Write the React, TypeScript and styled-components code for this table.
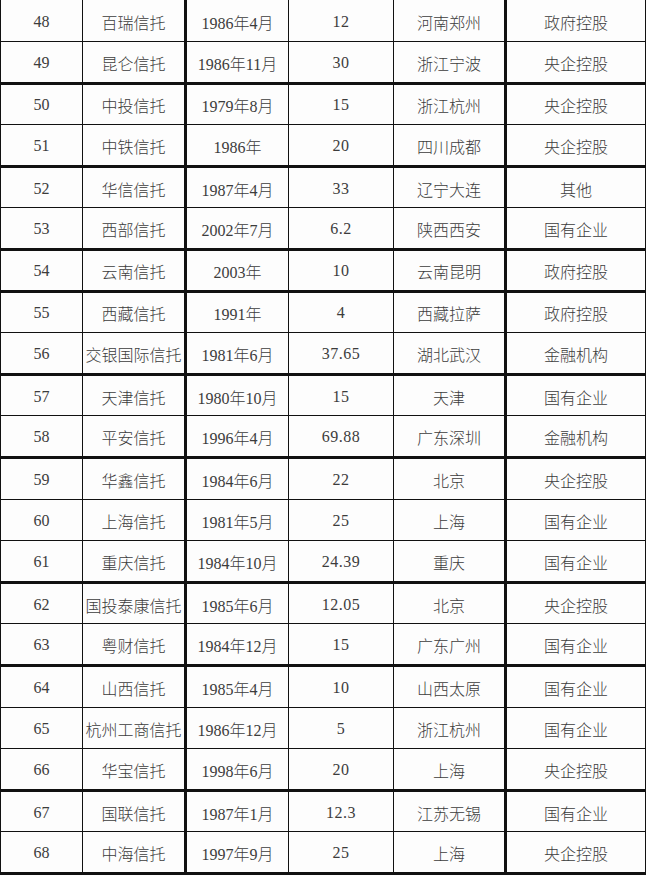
import React from 'react'
import styled, { createGlobalStyle } from 'styled-components'

const GlobalStyle = createGlobalStyle`
  html, body {
    margin: 0;
    padding: 0;
    background: #fdfdfd;
  }
`

const StyledSheet = styled.div`
  width: 646px;
  height: 876px;
  overflow: hidden;
  background: #fdfdfd;
`

const StyledTable = styled.table`
  width: 645px;
  border-collapse: collapse;
  table-layout: fixed;
  font-family: 'Liberation Serif', 'Noto Sans CJK SC', serif;
  font-size: 16px;
  color: #3c3c3c;
`

const StyledRow = styled.tr<{ $thick: boolean }>`
  height: 41.6px;
  td {
    border-bottom: ${p => (p.$thick ? '3px' : '1px')} solid #111;
  }
`

const StyledCell = styled.td<{ $thickRight?: boolean; $mono?: boolean }>`
  padding: 0;
  text-align: center;
  vertical-align: middle;
  white-space: nowrap;
  border-left: 1px solid #111;
  border-right: ${p => (p.$thickRight ? '3px' : '1px')} solid #111;
  font-weight: 300;
  padding-top: 2px;
  letter-spacing: ${p => (p.$mono ? '0.5px' : '0')};
`

const columns = [82, 103, 103, 105, 112, 140]

const rows: string[][] = [
  ['48', '百瑞信托', '1986年4月', '12', '河南郑州', '政府控股'],
  ['49', '昆仑信托', '1986年11月', '30', '浙江宁波', '央企控股'],
  ['50', '中投信托', '1979年8月', '15', '浙江杭州', '央企控股'],
  ['51', '中铁信托', '1986年', '20', '四川成都', '央企控股'],
  ['52', '华信信托', '1987年4月', '33', '辽宁大连', '其他'],
  ['53', '西部信托', '2002年7月', '6.2', '陕西西安', '国有企业'],
  ['54', '云南信托', '2003年', '10', '云南昆明', '政府控股'],
  ['55', '西藏信托', '1991年', '4', '西藏拉萨', '政府控股'],
  ['56', '交银国际信托', '1981年6月', '37.65', '湖北武汉', '金融机构'],
  ['57', '天津信托', '1980年10月', '15', '天津', '国有企业'],
  ['58', '平安信托', '1996年4月', '69.88', '广东深圳', '金融机构'],
  ['59', '华鑫信托', '1984年6月', '22', '北京', '央企控股'],
  ['60', '上海信托', '1981年5月', '25', '上海', '国有企业'],
  ['61', '重庆信托', '1984年10月', '24.39', '重庆', '国有企业'],
  ['62', '国投泰康信托', '1985年6月', '12.05', '北京', '央企控股'],
  ['63', '粤财信托', '1984年12月', '15', '广东广州', '国有企业'],
  ['64', '山西信托', '1985年4月', '10', '山西太原', '国有企业'],
  ['65', '杭州工商信托', '1986年12月', '5', '浙江杭州', '国有企业'],
  ['66', '华宝信托', '1998年6月', '20', '上海', '央企控股'],
  ['67', '国联信托', '1987年1月', '12.3', '江苏无锡', '国有企业'],
  ['68', '中海信托', '1997年9月', '25', '上海', '央企控股'],
]

// rows followed by a heavy rule in the scan
const thickAfter = ['49', '51', '53', '54', '56', '58', '61', '63', '66', '68']

const App: React.FC = () => {
  return (
    <StyledSheet>
      <GlobalStyle />
      <StyledTable>
        <colgroup>
          {columns.map((w, i) => (
            <col key={i} style={{ width: w }} />
          ))}
        </colgroup>
        <tbody>
          {rows.map(r => (
            <StyledRow key={r[0]} $thick={thickAfter.includes(r[0])}>
              {r.map((v, i) => (
                <StyledCell
                  key={i}
                  $thickRight={i === 1 || i === 4}
                  $mono={i === 3}
                >
                  {v}
                </StyledCell>
              ))}
            </StyledRow>
          ))}
        </tbody>
      </StyledTable>
    </StyledSheet>
  )
}

export default App
